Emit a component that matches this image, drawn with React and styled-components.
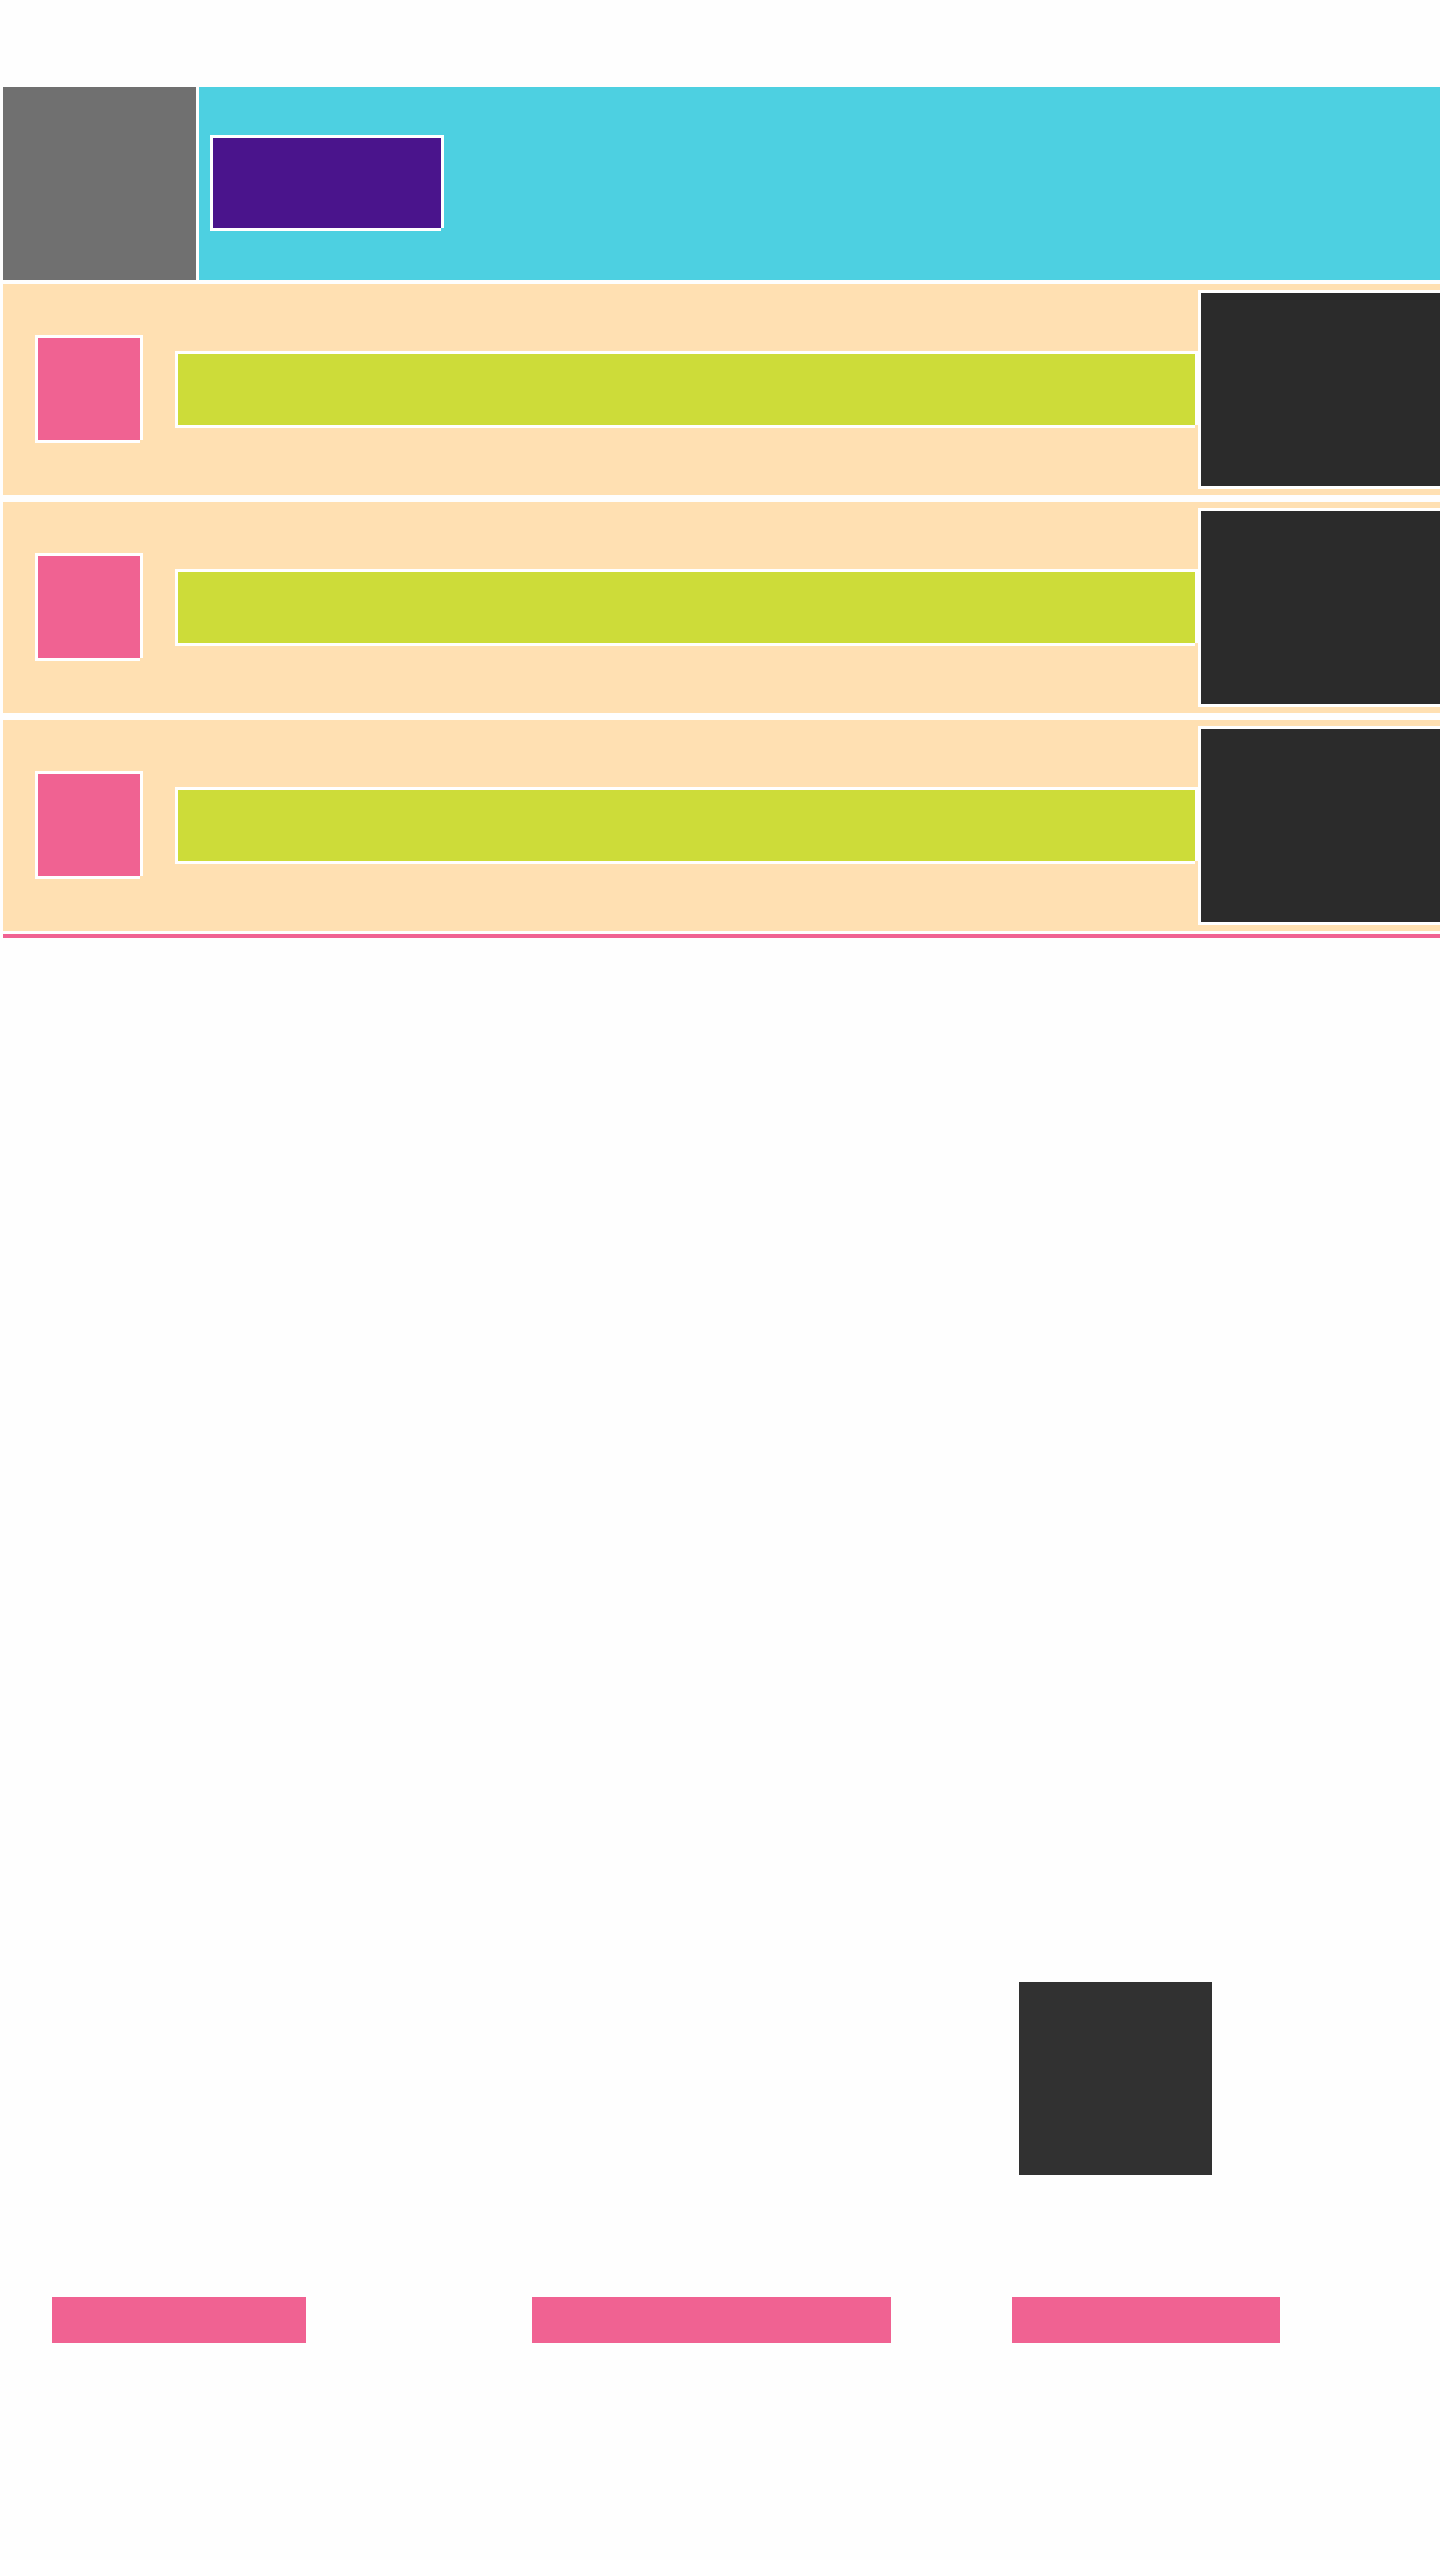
import React from "react";
import styled, { createGlobalStyle } from "styled-components";

const GlobalStyle = createGlobalStyle`
  html, body {
    margin: 0;
    padding: 0;
    background: #fefefe;
    font-family: "Liberation Sans", Arial, sans-serif;
    overflow-x: hidden;
  }
  * { box-sizing: border-box; }
`;

const Page = styled.div`
  width: 1440px;
  padding-top: 87px;
`;

const Top = styled.div`
  padding-left: 3px;
  display: flex;
  flex-direction: column;
`;

const Header = styled.header`
  display: flex;
  gap: 3px;
  height: 193px;
  overflow: hidden;
`;

const Logo = styled.div`
  flex: 0 0 193px;
  height: 193px;
  background: #707070;
`;

const Banner = styled.div`
  flex: 1;
  background: #4dd0e1;
  padding: 48px 0 0 11px;
`;

const framed = `
  border-top: 3px solid #ffffff;
  border-left: 3px solid #ffffff;
  box-shadow: 3px 0 0 0 #ffffff, 0 3px 0 0 #ffffff;
`;

const CTA = styled.button`
  display: block;
  width: 231px;
  height: 93px;
  padding: 0;
  border: none;
  background: #4a148c;
  ${framed}
`;

const List = styled.div`
  margin-top: 4px;
  display: flex;
  flex-direction: column;
  gap: 7px;
`;

const Row = styled.div`
  display: flex;
  align-items: flex-start;
  height: 211px;
  padding-left: 32px;
  background: #ffe0b2;
  overflow: hidden;
`;

const Thumb = styled.div`
  flex: 0 0 105px;
  height: 105px;
  margin-top: 51px;
  background: #f06292;
  ${framed}
`;

const Bar = styled.div`
  flex: 1;
  height: 74px;
  margin-top: 67px;
  margin-left: 35px;
  background: #cddc39;
  ${framed}
`;

const Panel = styled.div`
  flex: 0 0 242px;
  height: 196px;
  margin-top: 6px;
  margin-left: 3px;
  background: #2b2b2b;
  ${framed}
`;

const Rule = styled.div`
  margin-top: 3px;
  height: 4px;
  background: #f06292;
`;

const Features = styled.section`
  margin-top: 1044px;
  display: grid;
  grid-template-columns: repeat(3, 480px);
  row-gap: 122px;
`;

const Square = styled.div`
  grid-column: 3;
  width: 193px;
  height: 193px;
  margin-left: 59px;
  background: #313131;
`;

const Column = styled.div`
  grid-row: 2;
  padding-left: 52px;
`;

const Pill = styled.div`
  width: ${(p) => p.$w}px;
  height: 46px;
  background: #f06292;
`;

const rows = [0, 1, 2];
const pills = [254, 359, 268];

export default function App() {
  return (
    <>
      <GlobalStyle />
      <Page>
        <Top>
          <Header>
            <Logo />
            <Banner>
              <CTA aria-label="action" />
            </Banner>
          </Header>
          <List>
            {rows.map((r) => (
              <Row key={r}>
                <Thumb />
                <Bar />
                <Panel />
              </Row>
            ))}
          </List>
          <Rule />
        </Top>
        <Features>
          <Square />
          {pills.map((w, i) => (
            <Column key={i}>
              <Pill $w={w} />
            </Column>
          ))}
        </Features>
      </Page>
    </>
  );
}
